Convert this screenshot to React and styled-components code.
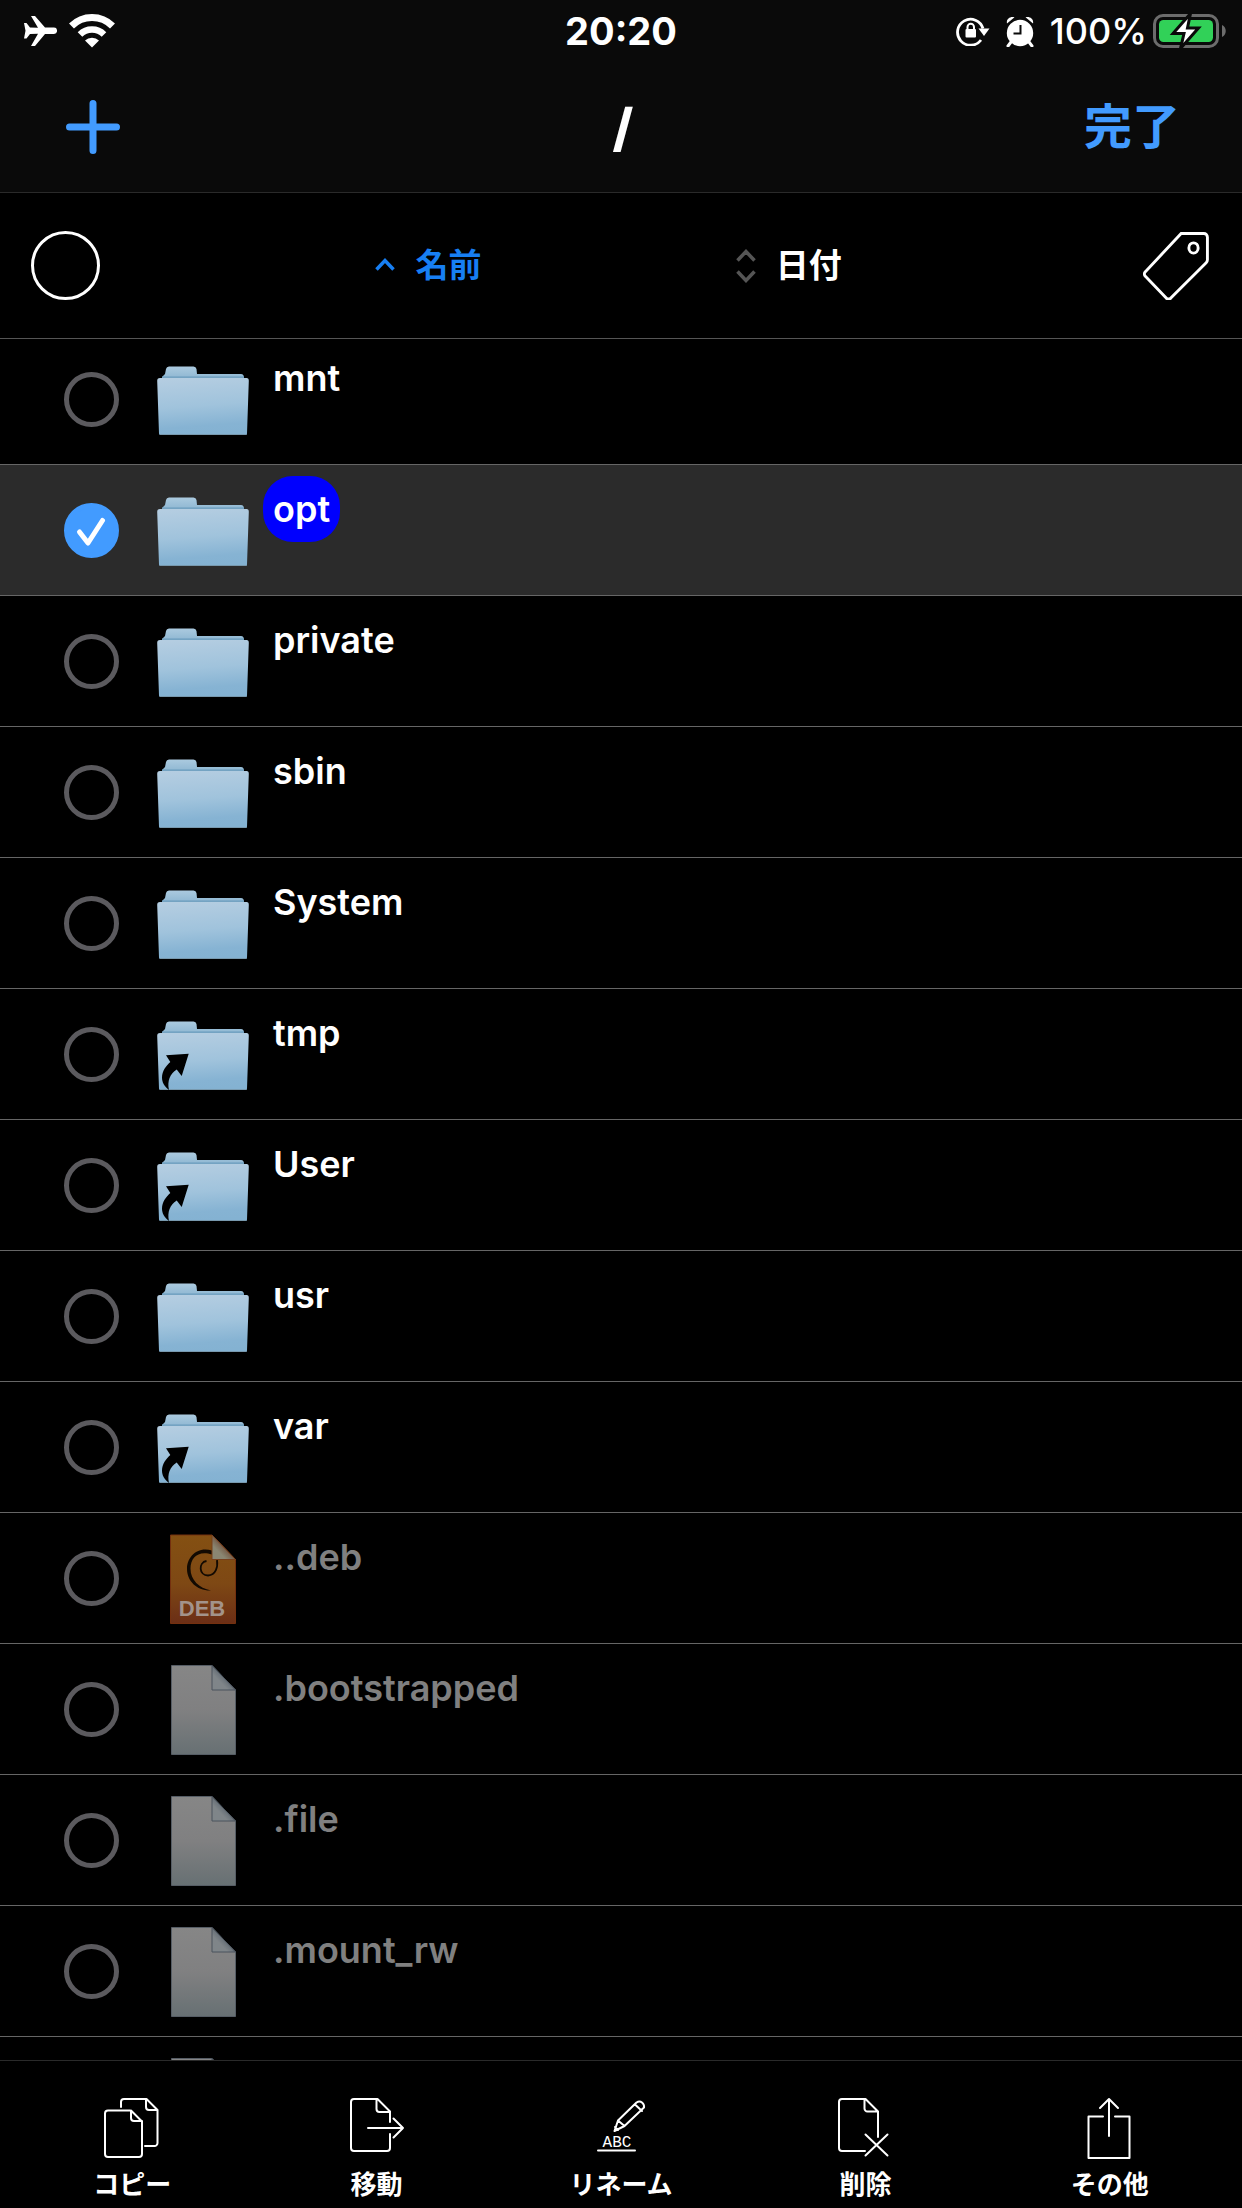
import { useState } from "react"
import styled, { createGlobalStyle } from "styled-components"

const filesData = [
  { name: "mnt", kind: "folder" },
  { name: "opt", kind: "folder" },
  { name: "private", kind: "folder" },
  { name: "sbin", kind: "folder" },
  { name: "System", kind: "folder" },
  { name: "tmp", kind: "folder", alias: true },
  { name: "User", kind: "folder", alias: true },
  { name: "usr", kind: "folder" },
  { name: "var", kind: "folder", alias: true },
  { name: "..deb", kind: "deb", hidden: true },
  { name: ".bootstrapped", kind: "file", hidden: true },
  { name: ".file", kind: "file", hidden: true },
  { name: ".mount_rw", kind: "file", hidden: true },
  { name: "", kind: "file", hidden: true },
]

/* ---------- status bar icons ---------- */

const AirplaneIcon = () => (
  <svg width="33" height="30" viewBox="0 0 33 30" fill="#fff" aria-hidden="true">
    <path d="M0 7h2.500l3.500 4.500 8 .3L7 0h4l10 11.500h9a3 3.200 0 0 1 0 6.500h-9L11 30H7l7-12.300-8 .3-3.500 4.500H0l1.500-7.800Z" />
  </svg>
)

const WifiIcon = () => (
  <svg width="46" height="34" viewBox="0 0 46 34" fill="none" aria-hidden="true">
    <path d="M2.500 12a29 29 0 0 1 41 0" stroke="#fff" strokeWidth="7" />
    <path d="M11 20.500a17 17 0 0 1 24 0" stroke="#fff" strokeWidth="6.500" />
    <path d="M16 26.500a10 10 0 0 1 14 0L23 33.500Z" fill="#fff" />
  </svg>
)

const RotationLockIcon = () => (
  <svg width="34" height="30" viewBox="0 0 34 30" aria-hidden="true">
    <path d="M27 12.500A13 13 0 1 0 25 24" fill="none" stroke="#fff" strokeWidth="2.800" />
    <path d="M22.500 12.500h11L28 20Z" fill="#fff" />
    <rect x="9.500" y="13" width="10.500" height="8.500" rx="1" fill="#fff" />
    <path d="M11.500 13.500v-2.500a3.200 3.200 0 0 1 6.500 0v2.500" fill="none" stroke="#fff" strokeWidth="2" />
  </svg>
)

const AlarmIcon = () => (
  <svg width="28" height="31" viewBox="0 0 28 31" aria-hidden="true">
    <circle cx="14" cy="17" r="13.200" fill="#fff" />
    <path d="M1 7.500C0 3 4 0 8.500 1.200ZM27 7.500C28 3 24 0 19.500 1.200Z" fill="#fff" />
    <path d="M5 26l-3 4M23 26l3 4" stroke="#fff" strokeWidth="3" strokeLinecap="round" />
    <path d="M14.500 9v8.500H7.500" fill="none" stroke="#0a0a0a" strokeWidth="2" />
  </svg>
)

const BatteryIcon = () => (
  <svg width="73" height="34" viewBox="0 0 73 34" aria-hidden="true">
    <rect x="1.500" y="1.500" width="63" height="31" rx="8.500" fill="none" stroke="#6c6c6c" strokeWidth="3" />
    <path d="M69 11c5 2 5 10 0 12Z" fill="#6c6c6c" />
    <rect x="6" y="6" width="54" height="22" rx="4.500" fill="#31d158" />
    <path
      d="M37.500-.5L20 19.500h11L27.500 34.500 45.500 14H34.500Z"
      fill="#fff"
      stroke="#0a0a0a"
      strokeWidth="3"
    />
  </svg>
)

/* ---------- header icons ---------- */

const PlusIcon = () => (
  <svg width="54" height="54" viewBox="0 0 54 54" aria-hidden="true">
    <path d="M27 3.500v47M3.500 27h47" stroke="#429bff" strokeWidth="7" strokeLinecap="round" />
  </svg>
)

const SortAscIcon = () => (
  <svg width="20" height="34" viewBox="0 0 20 34" fill="none" aria-hidden="true">
    <path d="M1.500 20.500l8.500-9 8.500 9" stroke="#177ff3" strokeWidth="3.500" />
  </svg>
)

const SortNoneIcon = () => (
  <svg width="20" height="34" viewBox="0 0 20 34" fill="none" aria-hidden="true">
    <path d="M1.500 11.500l8.500-9 8.500 9M1.500 22.500l8.500 9 8.500-9" stroke="#555" strokeWidth="3.500" />
  </svg>
)

const TagIcon = () => (
  <svg width="66" height="68" viewBox="0 0 64 66" fill="none" stroke="#fff" strokeWidth="2.800" aria-hidden="true">
    <path d="M37 1.500H59a3.500 3.500 0 0 1 3.500 3.500V27a4 4 0 0 1-1.200 2.800L27 64a3 3 0 0 1-4.500 0L2.300 43a3 3 0 0 1 0-4.500Z" />
    <ellipse cx="49" cy="15.500" rx="4.500" ry="5" />
  </svg>
)

/* ---------- file icons ---------- */

const FolderIcon = ({ alias }) => (
  <svg width="96" height="96" viewBox="0 0 96 96" aria-hidden="true">
    <defs>
      <linearGradient id="folderBack" x1="0" y1="0" x2="0" y2="1">
        <stop offset="0" stopColor="#abcadf" />
        <stop offset="1" stopColor="#8ab4d0" />
      </linearGradient>
      <linearGradient id="folderFront" x1="0.3" y1="0" x2="0.42" y2="1">
        <stop offset="0" stopColor="#b4cde1" />
        <stop offset="0.5" stopColor="#a0c3dc" />
        <stop offset="0.85" stopColor="#86b3d3" />
        <stop offset="1" stopColor="#84b2d2" />
      </linearGradient>
    </defs>
    <path
      d="M7 28V26l3-3 1-5q.5-2.500 3-2.500H38.500q2.500 0 3 2.500l.5 5H86q3 0 3 4v2Z"
      fill="url(#folderBack)"
    />
    <path d="M7 26.200H89" stroke="#6b9cbd" strokeWidth="1.200" />
    <path
      d="M5 27H91.500Q94 27 93.800 30L92 82.500q0 1.500-1.500 1.500H5.500Q4 84 4 82.500L2.200 30Q2 27 5 27Z"
      fill="url(#folderFront)"
    />
    <path d="M5 83.500H91.500" stroke="#7899ae" strokeWidth="1" />
    {alias && (
      <path
        d="M33.700 47.700L26.700 70l-5-6.500C15 68 12 75 14 84 9 80 7 76 7 71.500 7 65 11 60 15.300 56L11 49.300Z"
        fill="#000"
      />
    )}
  </svg>
)

const FileIcon = () => (
  <svg width="96" height="96" viewBox="0 0 96 96" aria-hidden="true">
    <defs>
      <linearGradient id="paper" x1="0" y1="0" x2="0" y2="1">
        <stop offset="0" stopColor="#868686" />
        <stop offset="0.5" stopColor="#808081" />
        <stop offset="1" stopColor="#677073" />
      </linearGradient>
      <linearGradient id="paperFold" x1="0.7" y1="0.3" x2="0.1" y2="0.9">
        <stop offset="0" stopColor="#4c5763" />
        <stop offset="0.6" stopColor="#7f8589" />
      </linearGradient>
    </defs>
    <path d="M16.500 4.500H57L80.500 29V93.500H16.500Z" fill="url(#paper)" stroke="#565d65" strokeWidth="1" />
    <path d="M57 4.500L80.500 29H57Z" fill="url(#paperFold)" stroke="#4a535c" strokeWidth="1" />
  </svg>
)

const DebIcon = () => (
  <svg width="96" height="96" viewBox="0 0 96 96" aria-hidden="true">
    <defs>
      <linearGradient id="debPaper" x1="0" y1="0" x2="0" y2="1">
        <stop offset="0" stopColor="#845012" />
        <stop offset="0.55" stopColor="#7e4814" />
        <stop offset="1" stopColor="#6b2e16" />
      </linearGradient>
      <linearGradient id="debFold" x1="0.6" y1="0.4" x2="0.1" y2="0.9">
        <stop offset="0" stopColor="#6d4a36" />
        <stop offset="0.6" stopColor="#8a8672" />
      </linearGradient>
    </defs>
    <path d="M15.500 5H57L80.500 29.500V93.500H15.500Z" fill="url(#debPaper)" stroke="#74300f" strokeWidth="1" />
    <path
      d="M57 20.500C42 16 32 27 32 39c0 12 10 22 24 21.500C44 58 35.500 50 35.500 38.500c0-11 8-18.500 21.500-14Z"
      fill="#120a02"
    />
    <path
      d="M62 30c1 7-1 15-9 15.500-9 0-10-13-1.500-14.500"
      fill="none"
      stroke="#120a02"
      strokeWidth="1.800"
    />
    <path d="M57 5L80.500 29.500H57Z" fill="url(#debFold)" stroke="#77401d" strokeWidth="1" />
    <text
      x="47"
      y="86"
      textAnchor="middle"
      fill="#a3938a"
      fontFamily="Liberation Sans, sans-serif"
      fontWeight="700"
      fontSize="22"
    >
      DEB
    </text>
  </svg>
)

const fileIcons = { folder: FolderIcon, file: FileIcon, deb: DebIcon }

/* ---------- toolbar icons ---------- */

const CopyIcon = () => (
  <>
    <path d="M30 14.500H8a3 3 0 0 0-3 3V58a3 3 0 0 0 3 3H39a3 3 0 0 0 3-3V25.500L31 14.500V22a3 3 0 0 0 3 3H42" />
    <path d="M21 11V6a3 3 0 0 1 3-3H46.500L57.500 14V47a3 3 0 0 1-3 3H45M46 3v8a3 3 0 0 0 3 3h8" />
  </>
)

const MoveIcon = () => (
  <>
    <path d="M45 26V15.500L32.500 3H9a3 3 0 0 0-3 3V52a3 3 0 0 0 3 3H42a3 3 0 0 0 3-3V38M31.500 3V13a3 3 0 0 0 3 3H45" />
    <path d="M23 32H58M48.500 22.500L58 32l-9.500 9.500" />
  </>
)

const RenameIcon = () => (
  <>
    <path d="M25.500 35L29 24.500 47.500 6.500q3-2 5.500 0t2 5L35.500 30ZM29 24.500l6.500 5.500M46 8.500l7 6.500M26 31l3 3" />
    <path d="M9 54.500H46" />
    <text
      x="28"
      y="51"
      textAnchor="middle"
      fill="#fff"
      stroke="none"
      fontFamily="Liberation Mono, monospace"
      fontWeight="400"
      fontSize="16"
    >
      ABC
    </text>
  </>
)

const DeleteIcon = () => (
  <>
    <path d="M32 55H9a3 3 0 0 1-3-3V6a3 3 0 0 1 3-3H32.500L45 15.500V41M31.500 3V12.500a3 3 0 0 0 3 3H45" />
    <path d="M32.500 38.500l22 21M54.500 38.500l-22 21" />
  </>
)

const ShareIcon = () => (
  <>
    <path d="M25 20.500H10.500V62H51.500V20.500H37" />
    <path d="M31 40V3M22 12l9-9 9 9" />
  </>
)

const actionsData = [
  { label: "コピー", icon: CopyIcon },
  { label: "移動", icon: MoveIcon },
  { label: "リネーム", icon: RenameIcon },
  { label: "削除", icon: DeleteIcon },
  { label: "その他", icon: ShareIcon },
]

const App = () => {
  const [selected, setSelected] = useState(["opt"])

  const toggle = (name) =>
    setSelected((prev) =>
      prev.includes(name) ? prev.filter((item) => item !== name) : [...prev, name]
    )

  return (
    <>
      <GlobalStyle />
      <Screen>
        <Header>
          <StatusBar>
            <StatusGroup>
              <AirplaneIcon />
              <WifiIcon />
            </StatusGroup>
            <Clock>20:20</Clock>
            <StatusGroup $end>
              <RotationLockIcon />
              <AlarmIcon />
              <Battery>
                100%
                <BatteryIcon />
              </Battery>
            </StatusGroup>
          </StatusBar>
          <NavBar>
            <NavButton aria-label="追加">
              <PlusIcon />
            </NavButton>
            <Title>/</Title>
            <NavButton $end>完了</NavButton>
          </NavBar>
        </Header>

        <SortBar>
          <SelectAll type="checkbox" aria-label="すべて選択" />
          <SortButton $active>
            <SortAscIcon />
            名前
          </SortButton>
          <SortButton>
            <SortNoneIcon />
            日付
          </SortButton>
          <TagButton aria-label="タグ">
            <TagIcon />
          </TagButton>
        </SortBar>

        <FileArea>
          <FileList>
            {filesData.map((file, index) => {
              const Icon = fileIcons[file.kind]
              const checked = selected.includes(file.name)
              return (
                <FileRow key={index} $checked={checked}>
                  <CheckWrapper>
                    <Check
                      type="checkbox"
                      id={`file-${index}`}
                      checked={checked}
                      onChange={() => toggle(file.name)}
                    />
                    {checked && (
                      <CheckMark viewBox="0 0 55 55" aria-hidden="true">
                        <path d="M15.500 29l8.500 11L38.500 17.500" />
                      </CheckMark>
                    )}
                  </CheckWrapper>
                  <Icon alias={file.alias} />
                  <FileName htmlFor={`file-${index}`} $checked={checked} $dim={file.hidden}>
                    {file.name}
                  </FileName>
                </FileRow>
              )
            })}
          </FileList>
        </FileArea>

        <Toolbar>
          {actionsData.map(({ label, icon: Icon }) => (
            <ToolButton key={label}>
              <ToolIcon viewBox="0 0 64 64" aria-hidden="true">
                <Icon />
              </ToolIcon>
              {label}
            </ToolButton>
          ))}
        </Toolbar>
      </Screen>
    </>
  )
}

const GlobalStyle = createGlobalStyle`
  * {
    box-sizing: border-box;
  }

  body {
    margin: 0;
    background: #000;
    color: #fff;
    font-family: Inter, "Noto Sans CJK JP", sans-serif;
  }

  button {
    padding: 0;
    border: none;
    background: none;
    color: inherit;
    font: inherit;
    cursor: pointer;
  }

  svg {
    display: block;
    flex-shrink: 0;
  }
`

const Screen = styled.div`
  display: flex;
  flex-direction: column;
  height: 100vh;
`

const Header = styled.header`
  background: #0a0a0a;
  border-bottom: 1px solid #2a2a2a;
`

const StatusBar = styled.div`
  display: grid;
  grid-template-columns: 1fr auto 1fr;
  align-items: center;
  height: 62px;
  padding: 0 16px;
`

const StatusGroup = styled.div`
  display: flex;
  align-items: center;
  justify-content: ${(props) => (props.$end ? "flex-end" : "flex-start")};
  gap: ${(props) => (props.$end ? "16px" : "12px")};
  padding-left: 8px;
`

const Clock = styled.time`
  font-size: 38px;
  font-weight: 700;
`

const Battery = styled.span`
  display: flex;
  align-items: center;
  gap: 6px;
  font-size: 36px;
  font-weight: 500;
`

const NavBar = styled.nav`
  display: grid;
  grid-template-columns: 1fr auto 1fr;
  align-items: center;
  height: 130px;
  padding: 0 62px 0 66px;
`

const NavButton = styled.button`
  justify-self: ${(props) => (props.$end ? "end" : "start")};
  color: #429bff;
  font-size: 48px;
  font-weight: 700;
  line-height: 1;
`

const Title = styled.h1`
  margin: 0;
  font-size: 52px;
  font-weight: 800;
`

const SortBar = styled.div`
  display: grid;
  grid-template-columns: 20% 1fr 1fr 22%;
  align-items: center;
  height: 146px;
  border-bottom: 1px solid #555;
`

const SelectAll = styled.input`
  appearance: none;
  width: 69px;
  height: 69px;
  margin: 0 0 0 31px;
  border: 3px solid #fff;
  border-radius: 50%;

  &:checked {
    background: #429bff;
  }
`

const SortButton = styled.button`
  display: flex;
  align-items: center;
  justify-content: center;
  gap: 20px;
  color: ${(props) => (props.$active ? "#177ff3" : "#fff")};
  font-size: 33px;
  font-weight: 700;
  line-height: 1;
`

const TagButton = styled.button`
  justify-self: end;
  margin-right: 33px;
`

const FileArea = styled.main`
  flex: 1;
  min-height: 0;
  overflow: hidden;
`

/* the list rests slightly scrolled under the sort bar */
const FileList = styled.ul`
  margin: -5px 0 0;
  padding: 0;
  list-style: none;
`

const FileRow = styled.li`
  display: flex;
  align-items: center;
  gap: 36px;
  height: 131px;
  padding-left: 64px;
  border-bottom: 1px solid #666;
  background: ${(props) => (props.$checked ? "#2b2b2b" : "transparent")};
`

const CheckWrapper = styled.span`
  position: relative;
  display: flex;
`

const Check = styled.input`
  appearance: none;
  width: 55px;
  height: 55px;
  margin: 0;
  border: 5px solid #5b5a5e;
  border-radius: 50%;

  &:checked {
    border-color: #429bff;
    background: #429bff;
  }
`

const CheckMark = styled.svg`
  position: absolute;
  inset: 0;
  fill: none;
  stroke: #fff;
  stroke-width: 5px;
  stroke-linecap: round;
  stroke-linejoin: round;
  pointer-events: none;
`

const FileName = styled.label`
  align-self: flex-start;
  margin: 11px 0 0 -24px;
  padding: 0 10px;
  border-radius: 30px;
  background: ${(props) => (props.$checked ? "#0000fe" : "transparent")};
  color: ${(props) => (props.$dim ? "#808080" : "#fff")};
  font-size: 36px;
  font-weight: 600;
  line-height: 66px;
`

const Toolbar = styled.footer`
  display: flex;
  padding: 35px 10px 0;
  border-top: 1px solid #2a2a2a;
`

const ToolButton = styled.button`
  display: flex;
  flex: 1;
  flex-direction: column;
  align-items: center;
  gap: 2px;
  font-size: 26px;
  font-weight: 700;
  line-height: 46px;
`

const ToolIcon = styled.svg`
  width: 64px;
  height: 64px;
  fill: none;
  stroke: #fff;
  stroke-width: 2px;
  stroke-linecap: round;
  stroke-linejoin: round;
`

export default App
